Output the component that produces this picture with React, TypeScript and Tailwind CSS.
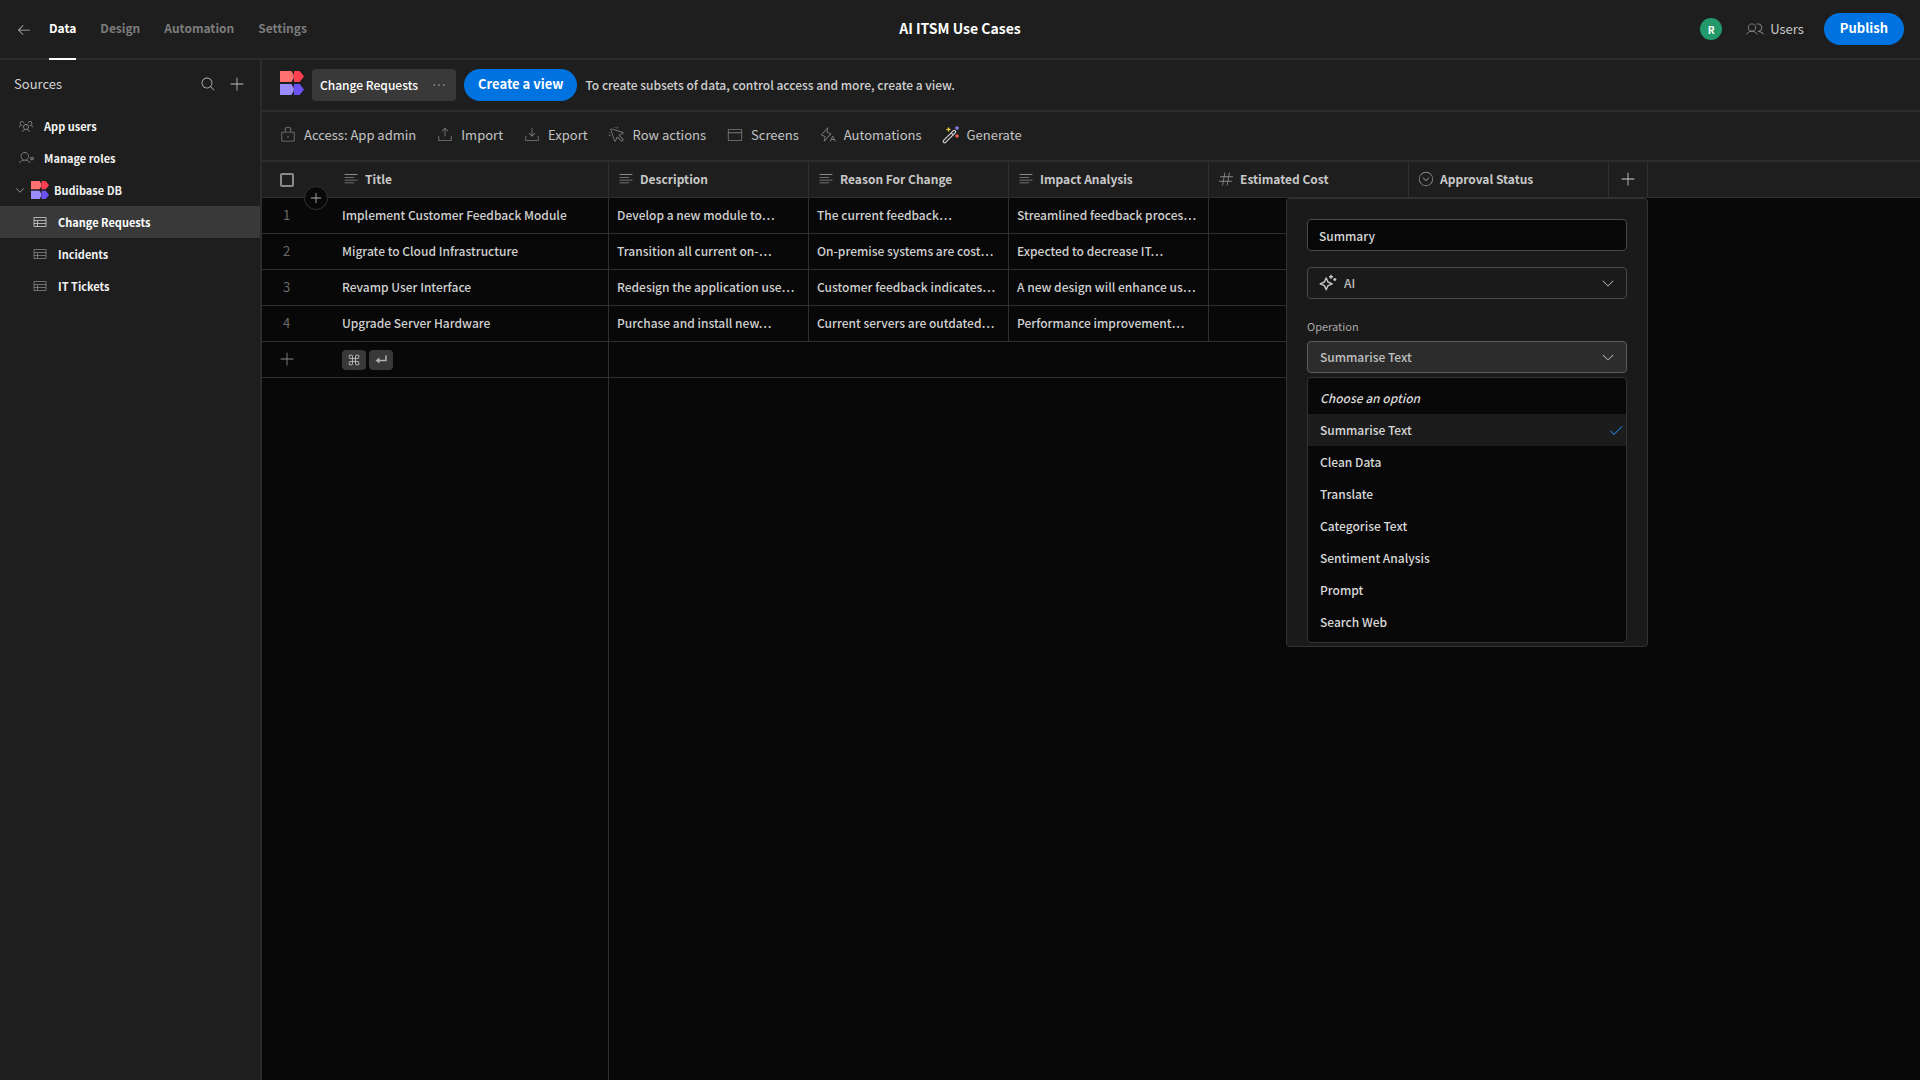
import {
  PiArrowLeftLight,
  PiBrowserLight,
  PiCaretCircleDownLight,
  PiCaretDownLight,
  PiCheck,
  PiCommand,
  PiCursorClickLight,
  PiDotsThree,
  PiDownloadSimpleLight,
  PiHashLight,
  PiLightningALight,
  PiLockLight,
  PiMagnifyingGlassLight,
  PiPlus,
  PiPlusLight,
  PiTableLight,
  PiTextAlignLeftLight,
  PiUploadSimpleLight,
  PiUserGearLight,
  PiUsersLight,
  PiUsersThreeLight,
} from "react-icons/pi";

const tabs = ["Data", "Design", "Automation", "Settings"];

const tables = ["Change Requests", "Incidents", "IT Tickets"];

const actions = [
  { label: "Access: App admin", icon: PiLockLight },
  { label: "Import", icon: PiUploadSimpleLight },
  { label: "Export", icon: PiDownloadSimpleLight },
  { label: "Row actions", icon: PiCursorClickLight },
  { label: "Screens", icon: PiBrowserLight },
  { label: "Automations", icon: PiLightningALight },
];

const columns = [
  { name: "Title", icon: PiTextAlignLeftLight },
  { name: "Description", icon: PiTextAlignLeftLight },
  { name: "Reason For Change", icon: PiTextAlignLeftLight },
  { name: "Impact Analysis", icon: PiTextAlignLeftLight },
  { name: "Estimated Cost", icon: PiHashLight },
  { name: "Approval Status", icon: PiCaretCircleDownLight },
];

const rows = [
  [
    "Implement Customer Feedback Module",
    "Develop a new module to…",
    "The current feedback…",
    "Streamlined feedback proces…",
  ],
  [
    "Migrate to Cloud Infrastructure",
    "Transition all current on-…",
    "On-premise systems are cost…",
    "Expected to decrease IT…",
  ],
  [
    "Revamp User Interface",
    "Redesign the application use…",
    "Customer feedback indicates…",
    "A new design will enhance us…",
  ],
  [
    "Upgrade Server Hardware",
    "Purchase and install new…",
    "Current servers are outdated…",
    "Performance improvement…",
  ],
];

const operations = [
  "Summarise Text",
  "Clean Data",
  "Translate",
  "Categorise Text",
  "Sentiment Analysis",
  "Prompt",
  "Search Web",
];

const BudibaseLogo = ({ className }: { className: string }) => (
  <svg viewBox="0 0 24 24" className={className} aria-hidden="true">
    <path d="M0 0h11.4l2.4 4v3l-2.4 4H0z" fill="#ff7070" />
    <path d="M14 0h5.6L24 5.5 19.6 11H14z" fill="#ff4050" />
    <path d="M0 13h11.4l2.4 4v3l-2.4 4H0z" fill="#9a8cff" />
    <path d="M14 13h5.6l4.4 5.5-4.4 5.5H14z" fill="#6a52f4" />
  </svg>
);

const MagicWand = () => (
  <svg viewBox="0 0 18 18" className="h-[18px] w-[18px]" fill="none" aria-hidden="true">
    <path
      d="M1.6 14.4 11.2 4.8a1.4 1.4 0 0 1 2 2L3.6 16.4a1.4 1.4 0 0 1-2-2zM9.2 6.8l2 2"
      stroke="#d0d0d0"
      strokeWidth="1.2"
    />
    <path d="M6.5 1.5v4M4.5 3.5h4" stroke="#e8c53a" strokeWidth="1.3" />
    <path d="M15 0v4M13 2h4" stroke="#8480f0" strokeWidth="1.3" />
    <path d="M15 8v4M13 10h4" stroke="#ec5b50" strokeWidth="1.3" />
  </svg>
);

const Sparkles = () => (
  <svg
    viewBox="0 0 18 18"
    className="h-[18px] w-[18px]"
    fill="none"
    stroke="#c8c8c8"
    strokeWidth="1.4"
    strokeLinejoin="round"
    aria-hidden="true"
  >
    <path d="M7.2 4 9 8l4.200 1.800L9 11.600 7.200 15.800 5.400 11.600 1.200 9.800 5.400 8z" />
    <path d="M12 .8v4M10 2.8h4M15.8 4v3M14.300 5.500h3" />
  </svg>
);

const ReturnArrow = () => (
  <svg viewBox="0 0 14 14" className="h-[14px] w-[14px]" fill="none" aria-hidden="true">
    <path d="M12 2.5v5H4" stroke="currentColor" strokeWidth="1.5" />
    <path d="M5.5 4.500v6l-4-3z" fill="currentColor" />
  </svg>
);

const Header = () => (
  <header className="grid h-[60px] shrink-0 grid-cols-3 border-b-2 border-[#2c2c2c] bg-[#1e1e1e] px-4">
    <div className="flex h-[60px] items-stretch gap-[17px] text-xs font-bold">
      <a href="#back" aria-label="Back" className="flex items-center text-[#c0c0c0]">
        <PiArrowLeftLight className="h-4 w-4" />
      </a>
      <nav className="flex gap-6">
        {tabs.map((tab, i) => (
          <a
            key={tab}
            href={`#${tab.toLowerCase()}`}
            className={
              i === 0
                ? "flex items-center border-b-2 border-white pb-0.5 text-white"
                : "flex items-center border-b-2 border-transparent pb-0.5 text-[#7c7c7c]"
            }
          >
            {tab}
          </a>
        ))}
      </nav>
    </div>
    <h1 className="self-center pb-1 text-center text-sm font-bold text-white">
      AI ITSM Use Cases
    </h1>
    <div className="flex items-center justify-end gap-5 pb-0.5">
      <span className="mr-1 flex h-[22px] w-[22px] items-center justify-center rounded-full bg-[#22996a] text-[10px] font-bold text-white">
        R
      </span>
      <button type="button" className="flex items-center gap-1.5 text-[13px] text-[#c8c8c8]">
        <PiUsersLight className="h-[18px] w-[18px] text-[#8a8a8a]" />
        Users
      </button>
      <button
        type="button"
        className="h-8 rounded-full bg-[#0073e0] px-4 pb-0.5 text-[13px] font-bold text-white"
      >
        Publish
      </button>
    </div>
  </header>
);

const Sidebar = () => (
  <aside className="w-[262px] shrink-0 border-r-2 border-[#2c2c2c] bg-[#1e1e1e] text-[11px] font-bold text-[#f2f2f2]">
    <div className="flex h-12 items-center gap-3 pr-[14px] pl-[14px] text-[13px] font-normal text-[#d4d4d4]">
      <h2 className="flex-1">Sources</h2>
      <button type="button" aria-label="Search" className="text-[#b8b8b8]">
        <PiMagnifyingGlassLight className="h-4 w-4" />
      </button>
      <button type="button" aria-label="Add source" className="text-[#c0c0c0]">
        <PiPlusLight className="h-[18px] w-[18px]" />
      </button>
    </div>
    <nav className="flex flex-col pt-0.5">
      <a href="#users" className="flex h-8 items-center gap-[10px] pl-[18px]">
        <PiUsersThreeLight className="h-4 w-4 text-[#8a8a8a]" />
        App users
      </a>
      <a href="#roles" className="flex h-8 items-center gap-[10px] pl-[18px]">
        <PiUserGearLight className="h-4 w-4 text-[#8a8a8a]" />
        Manage roles
      </a>
      <a href="#db" className="flex h-8 items-center gap-[5px] pl-[14px]">
        <PiCaretDownLight className="h-3 w-3 text-[#9a9a9a]" />
        <BudibaseLogo className="h-[18px] w-[18px]" />
        Budibase DB
      </a>
      {tables.map((table, i) => (
        <a
          key={table}
          href="#table"
          className={
            i === 0
              ? "flex h-8 items-center gap-[10px] bg-[#393939] pl-8 text-white"
              : "flex h-8 items-center gap-[10px] pl-8"
          }
        >
          <PiTableLight className={i === 0 ? "h-4 w-4 text-[#d8d8d8]" : "h-4 w-4 text-[#8a8a8a]"} />
          {table}
        </a>
      ))}
    </nav>
  </aside>
);

const ViewBar = () => (
  <div className="flex h-[52px] items-center gap-2 border-b-2 border-[#2c2c2c] pl-[18px]">
    <BudibaseLogo className="mb-1 h-6 w-6" />
    <button
      type="button"
      className="flex h-8 items-center gap-3 rounded bg-[#393939] px-2 text-xs font-medium text-white"
    >
      Change Requests
      <PiDotsThree className="h-[18px] w-[18px] text-[#a0a0a0]" />
    </button>
    <button
      type="button"
      className="h-8 rounded-full bg-[#0073e0] px-[14px] pb-0.5 text-[13px] font-bold text-white"
    >
      Create a view
    </button>
    <p className="text-xs font-medium text-[#d0d0d0]">
      To create subsets of data, control access and more, create a view.
    </p>
  </div>
);

const Toolbar = () => (
  <div className="flex h-[50px] items-center gap-5 border-b-2 border-[#2c2c2c] pb-0.5 pl-[17px] text-[13px] text-[#c4c4c4]">
    {actions.map(({ label, icon: Icon }) => (
      <button key={label} type="button" className="flex items-center gap-[7px]">
        <Icon className="h-[18px] w-[18px] text-[#7c7c7c]" />
        {label}
      </button>
    ))}
    <button type="button" className="flex items-center gap-[7px]">
      <MagicWand />
      Generate
    </button>
  </div>
);

const ColumnPopover = () => (
  <div className="absolute top-9 -right-px z-10 w-[362px] rounded border border-[#333333] bg-[#1a1a1a] px-5 pt-5 pb-[3px] text-left text-xs font-medium text-[#c0c0c0]">
    <input
      aria-label="Column name"
      defaultValue="Summary"
      className="block h-8 w-full rounded border border-[#4a4a4a] bg-[#080808] px-[11px] text-[#d8d8d8]"
    />
    <div className="relative mt-4">
      <select
        aria-label="Column type"
        className="block h-8 w-full appearance-none rounded border border-[#4a4a4a] bg-[#1a1a1a] pl-9"
      >
        <option>AI</option>
      </select>
      <span className="pointer-events-none absolute inset-y-0 left-3 flex items-center">
        <Sparkles />
      </span>
      <PiCaretDownLight className="pointer-events-none absolute inset-y-0 right-[11px] my-auto h-4 w-4" />
    </div>
    <label htmlFor="operation" className="mt-[15px] mb-[3px] block text-[11px] leading-6 font-normal text-[#a8a8a8]">
      Operation
    </label>
    <div className="relative">
      <select
        id="operation"
        className="block h-8 w-full appearance-none rounded border border-[#5c5c5c] bg-[#2c2c2c] px-3"
      >
        {operations.map((operation) => (
          <option key={operation}>{operation}</option>
        ))}
      </select>
      <PiCaretDownLight className="pointer-events-none absolute inset-y-0 right-[11px] my-auto h-4 w-4" />
    </div>
    <ul
      role="listbox"
      aria-label="Operation"
      className="mt-1 rounded border border-[#333333] bg-[#080808] py-1 text-[#d8d8d8]"
    >
      <li role="option" aria-selected="false" className="flex h-8 items-center px-3 italic">
        Choose an option
      </li>
      {operations.map((operation, i) => (
        <li
          key={operation}
          role="option"
          aria-selected={i === 0}
          className={
            i === 0
              ? "flex h-8 items-center justify-between bg-[#1c1c1c] pr-0.5 pl-3"
              : "flex h-8 items-center px-3"
          }
        >
          {operation}
          {i === 0 && <PiCheck className="h-4 w-4 text-[#1a7fd6]" />}
        </li>
      ))}
    </ul>
  </div>
);

const DataGrid = () => (
  <div className="flex flex-1 flex-col bg-[#080808]">
    <table className="w-full table-fixed border-separate border-spacing-0 text-xs font-medium text-[#d0d0d0]">
      <colgroup>
        <col className="w-[72px]" />
        <col className="w-[275px]" />
        <col className="w-[200px]" />
        <col className="w-[200px]" />
        <col className="w-[200px]" />
        <col className="w-[200px]" />
        <col className="w-[200px]" />
        <col className="w-[39px]" />
        <col />
      </colgroup>
      <thead>
        <tr className="h-9 bg-[#1e1e1e]">
          <th className="relative border-b border-[#2f2f2f] p-0 pl-[18px] text-left">
            <input
              type="checkbox"
              aria-label="Select all rows"
              className="block h-[14px] w-[14px] appearance-none rounded-xs border-2 border-[#8a8a8a]"
            />
            <button
              type="button"
              aria-label="Insert row"
              className="absolute right-1.5 -bottom-[13px] flex h-6 w-6 items-center justify-center rounded-full border border-[#333333] bg-[#080808] text-[#b0b0b0]"
            >
              <PiPlus className="h-[14px] w-[14px]" />
            </button>
          </th>
          {columns.map(({ name, icon: Icon }) => (
            <th
              key={name}
              className="border-r border-b border-[#2f2f2f] p-0 pb-0.5 pl-2 font-bold text-[#c8c8c8]"
            >
              <span className="flex items-center gap-[5px]">
                <Icon className="h-[18px] w-[18px] text-[#8a8a8a]" />
                {name}
              </span>
            </th>
          ))}
          <th className="relative border-r border-b border-[#2f2f2f] p-0 pb-0.5">
            <button type="button" aria-label="Add column" className="mx-auto block text-[#d0d0d0]">
              <PiPlusLight className="h-[18px] w-[18px]" />
            </button>
            <ColumnPopover />
          </th>
          <th className="border-b border-[#2f2f2f] p-0" />
        </tr>
      </thead>
      <tbody>
        {rows.map((row, i) => (
          <tr key={row[0]} className="h-9">
            <td className="border-b border-[#2f2f2f] p-0 pb-0.5 pl-[21px] text-[13px] font-normal text-[#6c6c6c]">
              {i + 1}
            </td>
            {columns.map((column, c) => (
              <td
                key={column.name}
                className="border-r border-b border-[#2f2f2f] p-0 pb-0.5 pl-2 whitespace-nowrap"
              >
                {row[c]}
              </td>
            ))}
          </tr>
        ))}
        <tr className="h-9">
          <td className="border-b border-[#2f2f2f] p-0 pb-0.5 pl-4 text-[#8a8a8a]">
            <button type="button" aria-label="Add row" className="block">
              <PiPlusLight className="h-[18px] w-[18px]" />
            </button>
          </td>
          <td className="border-r border-b border-[#2f2f2f] p-0 pl-2">
            <span className="flex gap-[3px] text-[#b0b0b0]">
              <kbd className="flex h-5 w-6 items-center justify-center rounded bg-[#393939]">
                <PiCommand className="h-4 w-4" />
              </kbd>
              <kbd className="flex h-5 w-6 items-center justify-center rounded bg-[#393939]">
                <ReturnArrow />
              </kbd>
            </span>
          </td>
          <td colSpan={5} className="border-b border-[#2f2f2f] p-0" />
        </tr>
      </tbody>
    </table>
    <div className="w-[347px] flex-1 border-r border-[#2f2f2f]" />
  </div>
);

const App = () => (
  <div className="flex min-h-screen flex-col bg-[#1e1e1e] font-['Noto_Sans_CJK_SC',sans-serif]">
    <Header />
    <div className="flex flex-1">
      <Sidebar />
      <main className="flex min-w-0 flex-1 flex-col">
        <ViewBar />
        <Toolbar />
        <DataGrid />
      </main>
    </div>
  </div>
);

export default App;
